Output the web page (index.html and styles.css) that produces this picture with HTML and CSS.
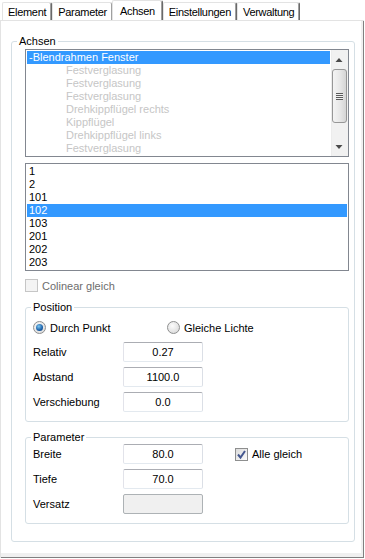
FILE: index.html
```html
<!DOCTYPE html>
<html lang="de">
<head>
    <meta charset="UTF-8">
    <title>Achsen</title>
    <link rel="stylesheet" href="styles.css">
</head>
<body>
    <div class="tabs">
        <div class="tab">Element</div>
        <div class="tab">Parameter</div>
        <div class="tab active">Achsen</div>
        <div class="tab">Einstellungen</div>
        <div class="tab">Verwaltung</div>
    </div>

    <div class="page">
        <fieldset class="group outer">
            <legend>Achsen</legend>
            <div class="group-body outer-body">
                <div class="listbox tree">
                    <ul class="items">
                        <li class="selected">-Blendrahmen Fenster</li>
                        <li class="child">Festverglasung</li>
                        <li class="child">Festverglasung</li>
                        <li class="child">Festverglasung</li>
                        <li class="child">Drehkippflügel rechts</li>
                        <li class="child">Kippflügel</li>
                        <li class="child">Drehkippflügel links</li>
                        <li class="child">Festverglasung</li>
                    </ul>
                    <div class="scrollbar">
                        <div class="sb-btn">
                            <svg width="17" height="17" viewBox="0 0 17 17"><polygon points="4.5,12 11.5,12 8,8" fill="#4a4a4a"/></svg>
                        </div>
                        <div class="sb-track">
                            <div class="sb-thumb"><span class="grip"></span></div>
                        </div>
                        <div class="sb-btn">
                            <svg width="17" height="17" viewBox="0 0 17 17"><polygon points="4.5,6 11.5,6 8,10" fill="#4a4a4a"/></svg>
                        </div>
                    </div>
                </div>

                <ul class="listbox items numbers">
                    <li>1</li>
                    <li>2</li>
                    <li>101</li>
                    <li class="selected">102</li>
                    <li>103</li>
                    <li>201</li>
                    <li>202</li>
                    <li>203</li>
                </ul>

                <label class="check disabled"><span class="box"></span>Colinear gleich</label>

                <fieldset class="group inner">
                    <legend>Position</legend>
                    <div class="group-body">
                        <div class="radios">
                            <label class="radio-item"><span class="radio on"></span>Durch Punkt</label>
                            <label class="radio-item"><span class="radio"></span>Gleiche Lichte</label>
                        </div>
                        <div class="fields">
                            <div class="field"><label>Relativ</label><input type="text" value="0.27"></div>
                            <div class="field"><label>Abstand</label><input type="text" value="1100.0"></div>
                            <div class="field"><label>Verschiebung</label><input type="text" value="0.0"></div>
                        </div>
                    </div>
                </fieldset>

                <fieldset class="group inner params">
                    <legend>Parameter</legend>
                    <div class="group-body">
                        <div class="fields">
                            <div class="field">
                                <label>Breite</label><input type="text" value="80.0">
                                <label class="check checked"><span class="box">
                                    <svg width="11" height="11" viewBox="0 0 11 11"><path d="M2 5.5 L4.5 8.5 L9 2" fill="none" stroke="#44578f" stroke-width="2"/></svg>
                                </span>Alle gleich</label>
                            </div>
                            <div class="field"><label>Tiefe</label><input type="text" value="70.0"></div>
                            <div class="field"><label>Versatz</label><input type="text" value="" disabled></div>
                        </div>
                    </div>
                </fieldset>
            </div>
        </fieldset>
    </div>
</body>
</html>
```

FILE: styles.css
```css
body {
    margin: 0;
    background: #fff;
    font-family: "Liberation Sans", Arial, sans-serif;
    font-size: 11px;
    color: #000;
}
.tabs {
    display: flex;
    align-items: flex-end;
    height: 20px;
    padding-left: 2px;
}
.tab {
    height: 18px;
    line-height: 18px;
    padding: 0 5px;
    box-sizing: border-box;
    border: 1px solid #e3e3e3;
    border-bottom: none;
    border-right: 1px solid #696969;
    box-shadow: inset -1px 0 #a0a0a0;
    border-radius: 2px 2px 0 0;
    letter-spacing: -0.3px;
    white-space: nowrap;
}
.tab.active {
    height: 20px;
    line-height: 20px;
    padding: 0 7px;
    margin-left: -1px;
}
.page {
    width: 364px;
    height: 538px;
    box-sizing: border-box;
    border-top: 1px solid #e3e3e3;
    border-left: 1px solid #e3e3e3;
    box-shadow: inset -1px -1px 0 #808080, inset -3px -5px 0 #f0f0f0;
    padding: 14px 0 0 10px;
}
.group {
    margin: 0;
    padding: 0;
    min-width: 0;
    border: 1px solid #d5dfe5;
    border-radius: 3px;
}
.group legend {
    margin-left: 5px;
    padding: 0 2px;
    line-height: 13px;
}
.outer {
    width: 344px;
    box-sizing: border-box;
}
.outer-body {
    padding: 1px 0 17px 13px;
}
.inner {
    width: 324px;
    box-sizing: border-box;
    margin-top: 9px;
}
.inner .group-body {
    padding: 7px 0 9px 7px;
}
.params .group-body {
    padding-top: 0;
}
.listbox {
    width: 324px;
    height: 108px;
    box-sizing: border-box;
    border: 1px solid #828790;
    background: #fff;
}
.items {
    list-style: none;
    margin: 0;
    padding: 1px;
}
.items li {
    height: 13px;
    line-height: 13px;
    padding-left: 2px;
    white-space: nowrap;
}
.items li.selected {
    background: #3399ff;
    color: #fff;
}
.tree {
    display: flex;
}
.tree .items {
    flex: 1;
}
.tree li.child {
    padding-left: 39px;
    color: #c6c6c6;
}
.numbers {
    margin-top: 6px;
}
.scrollbar {
    width: 17px;
    display: flex;
    flex-direction: column;
    background: #f1f1f1;
    border-left: 1px solid #ececec;
    box-sizing: border-box;
}
.sb-btn {
    height: 17px;
}
.sb-btn svg {
    display: block;
    margin-left: -1px;
}
.sb-track {
    flex: 1;
    padding-top: 2px;
}
.sb-thumb {
    width: 15px;
    height: 54px;
    box-sizing: border-box;
    border: 1px solid #979797;
    border-radius: 3px;
    background: linear-gradient(to right, #f4f4f4, #e8e8e8 50%, #d5d5d5);
    display: flex;
    align-items: center;
    justify-content: center;
}
.grip {
    width: 7px;
    height: 7px;
    background: repeating-linear-gradient(#5a5a5a 0 1px, #f0f0f0 1px 2px);
}
.check {
    display: flex;
    align-items: center;
    gap: 4px;
    height: 13px;
}
.outer-body > .check {
    margin-top: 8px;
}
.check .box {
    width: 13px;
    height: 13px;
    box-sizing: border-box;
    border: 1px solid #8e8f8f;
    background: linear-gradient(135deg, #dcdcdc, #fbfbfb);
    display: flex;
    align-items: center;
    justify-content: center;
}
.check.disabled {
    color: #6d6d6d;
}
.check.disabled .box {
    border-color: #c6c6c6;
    background: #f4f4f4;
}
.check.checked {
    margin-left: 32px;
}
.radios {
    display: flex;
    height: 13px;
}
.radio-item {
    display: flex;
    align-items: center;
    gap: 4px;
    width: 134px;
}
.radio {
    width: 13px;
    height: 13px;
    box-sizing: border-box;
    border-radius: 50%;
    border: 1px solid #8e8f8f;
    background: radial-gradient(circle at 40% 35%, #fcfcfc, #d4d4d4);
    display: flex;
    align-items: center;
    justify-content: center;
}
.radio.on::after {
    content: "";
    width: 7px;
    height: 7px;
    border-radius: 50%;
    background: radial-gradient(circle at 40% 35%, #7fc8f0, #1a5fa8 60%, #0d3a70);
}
.fields {
    display: flex;
    flex-direction: column;
    gap: 5px;
    margin-top: 8px;
}
.params .fields {
    margin-top: 0;
}
.field {
    display: flex;
    align-items: center;
    height: 20px;
}
.field > label:first-child {
    width: 90px;
}
.field input {
    width: 80px;
    height: 20px;
    box-sizing: border-box;
    padding: 0;
    border: 1px solid;
    border-color: #abadb3 #dbdfe6 #e3e9ef #e2e3ea;
    border-radius: 2px;
    font: inherit;
    color: #000;
    text-align: center;
    background: #fff;
}
.field input:disabled {
    background: #f0f0f0;
    border-color: #adb2b5;
}
```
